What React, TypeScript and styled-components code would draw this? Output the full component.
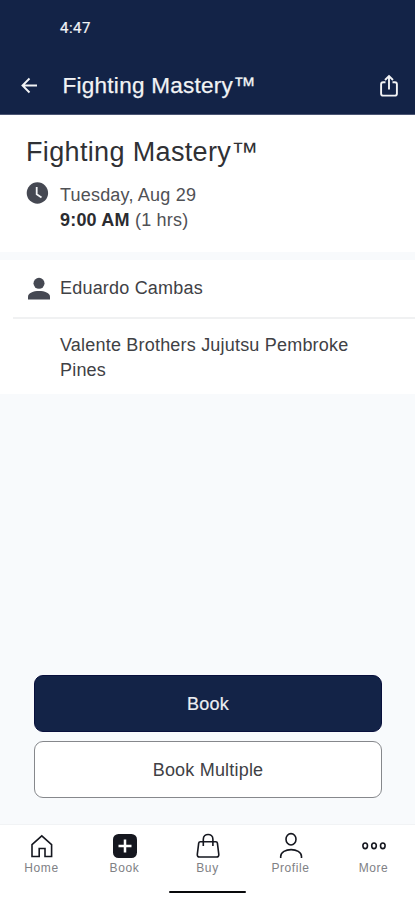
import React from "react";
import styled, { createGlobalStyle } from "styled-components";

const navy = "#132347";

const GlobalStyle = createGlobalStyle`
  * { box-sizing: border-box; }
  body { margin: 0; font-family: "Liberation Sans", Arial, sans-serif; background: #f8fafc; }
  button { font-family: inherit; padding: 0; }
  svg { display: block; }
`;

const Screen = styled.div`
  width: 100%;
  max-width: 415px;
  height: 900px;
  display: flex;
  flex-direction: column;
  background: #f8fafc;
  overflow: hidden;
`;

const Header = styled.header`
  height: 115px;
  flex: none;
  background: ${navy};
  border-bottom: 1px solid #4b5573;
  color: #f2f3f5;
`;

const StatusBar = styled.div`
  height: 57px;
  padding: 19px 0 0 60px;
  font: 400 15px/19px Roboto, sans-serif;
  letter-spacing: 0.5px;
  -webkit-text-stroke: 0.2px currentColor;
`;

const TitleBar = styled.div`
  height: 57px;
  display: flex;
  align-items: center;
  padding: 0 16px 0 21px;
`;

const IconButton = styled.button`
  border: 0;
  background: none;
  color: inherit;
`;

const HeaderTitle = styled.h1`
  flex: 1;
  margin: 0 0 0 24.5px;
  font-size: 22.5px;
  line-height: 30px;
  font-weight: 400;
  letter-spacing: 0.27px;
  -webkit-text-stroke: 0.25px currentColor;
`;

const Summary = styled.section`
  height: 137px;
  flex: none;
  padding: 20px 27px 0 25px;
  background: #fff;
`;

const ClassName = styled.h2`
  margin: 0 0 0 1px;
  font-size: 27px;
  line-height: 35px;
  font-weight: 400;
  letter-spacing: 0.35px;
  color: #303135;
`;

const Schedule = styled.div`
  display: flex;
  padding-top: 12px;
  font-size: 18px;
  line-height: 25px;
  letter-spacing: 0.2px;
  color: #505155;
  strong { color: #2b2c30; }
`;

const ScheduleText = styled.div`
  padding-top: 1px;
`;

const IconSlot = styled.span`
  width: 35px;
  flex: none;
`;

const Details = styled.section`
  margin-top: 8px;
  height: 134px;
  flex: none;
  background: #fff;
  color: #404145;
  font-size: 18px;
  line-height: 25px;
  letter-spacing: 0.2px;
`;

const Instructor = styled.div`
  height: 57px;
  display: flex;
  align-items: center;
  padding-left: 25px;
`;

const Venue = styled.div`
  margin-left: 13px;
  border-top: 2px solid #f0f1f2;
  padding: 14px 60px 0 47px;
`;

const Actions = styled.div`
  margin-top: auto;
  padding: 0 33px 26px 34px;
  display: grid;
  gap: 9px;
`;

const ActionButton = styled.button<{ $primary?: boolean }>`
  height: 57px;
  padding-top: 2px;
  border-radius: 9px;
  border: 1px solid ${(p) => (p.$primary ? "#080f3c" : "#86888c")};
  background: ${(p) => (p.$primary ? navy : "#fff")};
  color: ${(p) => (p.$primary ? "#eceef2" : "#404145")};
  font-size: 18px;
  letter-spacing: 0.2px;
  -webkit-text-stroke: ${(p) => (p.$primary ? "0.2px currentColor" : "0")};
`;

const BottomBar = styled.footer`
  height: 76px;
  flex: none;
  background: #fff;
  border-top: 1px solid #f1f3f5;
`;

const Tabs = styled.nav`
  height: 66px;
  display: grid;
  grid-template-columns: repeat(5, 1fr);
`;

const Tab = styled.div`
  display: flex;
  flex-direction: column;
  align-items: center;
  padding-top: 7px;
  color: #15171f;
`;

const TabLabel = styled.span`
  margin-top: 1px;
  font-size: 12px;
  line-height: 14px;
  letter-spacing: 0.6px;
  color: #808185;
`;

const HomeIndicator = styled.div`
  width: 77px;
  height: 2px;
  margin: 0 auto;
  border-radius: 1px;
  background: #08090b;
`;

const line = { fill: "none", stroke: "currentColor", strokeWidth: 1.6 } as const;

const tabs = [
  { label: "Home", icon: <path d="M4 12.6 13.8 3.8l9.8 8.8v11.9H17v-8h-5.8v8H4z" {...line} /> },
  {
    label: "Book",
    icon: (
      <>
        <rect x="2" y="2" width="24" height="24" rx="5.5" fill="currentColor" />
        <path d="M14 7.5v13M7.5 14h13" stroke="#fff" strokeWidth="2.5" />
      </>
    ),
  },
  {
    label: "Buy",
    icon: (
      <>
        <path d="M6.3 9.8h15.6q1.3 0 1.5 1.3l1.4 11.3q.2 2.6-2.3 2.6H5.6q-2.5 0-2.3-2.6l1.4-11.3q.2-1.3 1.6-1.3z" {...line} />
        <path d="M9.3 14V7.2c0-6.3 9.6-6.3 9.6 0V14" {...line} />
      </>
    ),
  },
  {
    label: "Profile",
    icon: (
      <>
        <ellipse cx="14" cy="7.3" rx="5" ry="5.7" {...line} />
        <path d="M3.7 26v-1.5c0-9.2 20.8-9.2 20.8 0V26" {...line} />
      </>
    ),
  },
  {
    label: "More",
    icon: (
      <>
        {[5.2, 14, 22.8].map((cx) => (
          <ellipse key={cx} cx={cx} cy="13.8" rx="2.3" ry="2.8" {...line} />
        ))}
      </>
    ),
  },
];

export default function App() {
  return (
    <>
      <GlobalStyle />
      <Screen>
        <Header>
          <StatusBar>4:47</StatusBar>
          <TitleBar>
            <IconButton aria-label="Back">
              <svg width="17" height="17" viewBox="0 0 17 17" fill="none" stroke="currentColor" strokeWidth="1.9">
                <path d="M16 8.5H1.7M8.5 1.5l-7 7 7 7" />
              </svg>
            </IconButton>
            <HeaderTitle>Fighting Mastery™</HeaderTitle>
            <IconButton aria-label="Share">
              <svg width="20" height="24" viewBox="0 0 20 24" fill="none" stroke="currentColor" strokeWidth="1.9">
                <path d="M6.5 8.2H4.1Q2.1 8.2 2.1 10.2v9.2Q2.1 21.6 4.1 21.6h11.8q2 0 2-2.2v-9.2q0-2-2-2h-2.4M10 15.5V2.2M6 6l4-4 4 4" />
              </svg>
            </IconButton>
          </TitleBar>
        </Header>

        <Summary>
          <ClassName>Fighting Mastery™</ClassName>
          <Schedule>
            <IconSlot>
              <svg width="24" height="24" viewBox="0 0 24 24">
                <circle cx="12.4" cy="11" r="10.7" fill="#454852" />
                <path d="M11.7 5v7.3l4.8 3.2" fill="none" stroke="#f4f5f7" strokeWidth="1.8" />
              </svg>
            </IconSlot>
            <ScheduleText>
              Tuesday, Aug 29
              <br />
              <strong>9:00 AM</strong> (1 hrs)
            </ScheduleText>
          </Schedule>
        </Summary>

        <Details>
          <Instructor>
            <IconSlot>
              <svg width="28" height="24" viewBox="0 0 28 24" fill="#454852">
                <circle cx="14" cy="6.3" r="5.5" />
                <path d="M3 22.5v-2.8c0-7.6 22-7.6 22 0v2.8z" />
              </svg>
            </IconSlot>
            Eduardo Cambas
          </Instructor>
          <Venue>Valente Brothers Jujutsu Pembroke Pines</Venue>
        </Details>

        <Actions>
          <ActionButton $primary>Book</ActionButton>
          <ActionButton>Book Multiple</ActionButton>
        </Actions>

        <BottomBar>
          <Tabs>
            {tabs.map(({ label, icon }) => (
              <Tab key={label}>
                <svg width="28" height="28" viewBox="0 0 28 28">{icon}</svg>
                <TabLabel>{label}</TabLabel>
              </Tab>
            ))}
          </Tabs>
          <HomeIndicator />
        </BottomBar>
      </Screen>
    </>
  );
}
